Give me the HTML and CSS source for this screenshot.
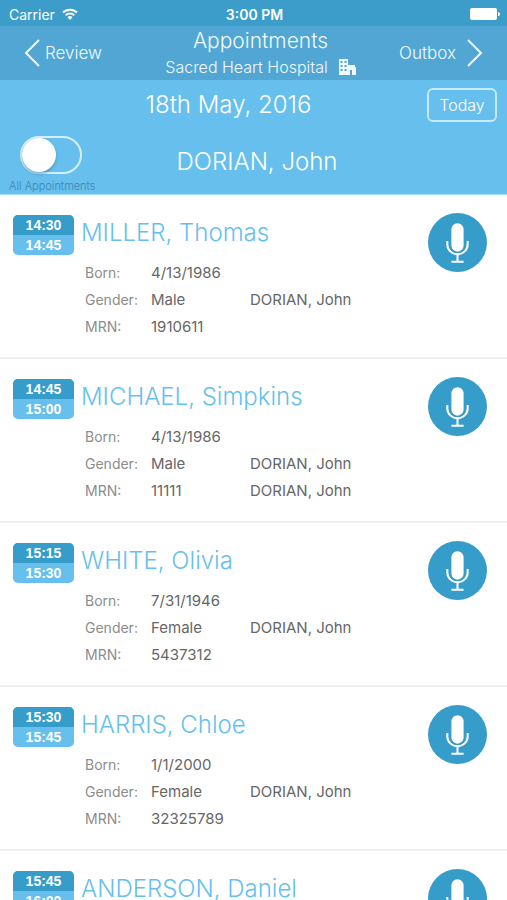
FILE: index.html
```html
<!DOCTYPE html>
<html lang="en">
<head>
<meta charset="utf-8">
<meta name="viewport" content="width=device-width, initial-scale=1">
<title>Appointments</title>
<link rel="stylesheet" href="styles.css">
</head>
<body>
<svg class="defs" width="0" height="0" aria-hidden="true">
  <symbol id="mic" viewBox="0 0 58 58">
    <rect x="23" y="10" width="12" height="28" rx="6" fill="currentColor"/>
    <path d="M19 27.500V31a10 9.500 0 0 0 20 0v-3.500M29 40.500V48M23 48h12" fill="none" stroke="currentColor" stroke-width="2"/>
  </symbol>
</svg>
<div class="app">
  <div class="status">
    <span class="carrier">Carrier
      <svg width="16" height="12" viewBox="0 0 16 12" fill="none" stroke="currentColor" stroke-width="2" aria-hidden="true"><path d="M1 4.500a10 10 0 0 1 14 0M3.700 7.300a6.200 6.200 0 0 1 8.600 0"/><path d="M8 12 5.500 9.300a3.600 3.600 0 0 1 5 0z" fill="currentColor" stroke="none"/></svg>
    </span>
    <time class="clock">3:00 PM</time>
    <svg class="battery" width="30" height="12" viewBox="0 0 30 12" fill="currentColor" aria-hidden="true"><rect width="27" height="12" rx="2"/><path d="M28 4a2 2 0 0 1 0 4z"/></svg>
  </div>
  <header class="nav">
    <a class="nav-link" href="#review"><svg width="16" height="28" viewBox="0 0 16 28" fill="none" stroke="currentColor" stroke-width="2" aria-hidden="true"><path d="M15 1 2 14l13 13"/></svg>Review</a>
    <div class="nav-title">
      <h1>Appointments</h1>
      <p>Sacred Heart Hospital
        <svg width="17" height="16" viewBox="0 0 17 16" fill="currentColor" fill-rule="evenodd" aria-hidden="true"><path d="M0 0h9v6h7v2h1v8h-4v-5h-2v5H0zM1.500 2v2h2V2zm4 0v2h2V2zm-4 4v2h2V6zm4 0v2h2V6zm-4 4v2h2v-2zm4 0v2h2v-2z"/></svg>
      </p>
    </div>
    <a class="nav-link nav-next" href="#outbox">Outbox<svg width="16" height="28" viewBox="0 0 16 28" fill="none" stroke="currentColor" stroke-width="2" aria-hidden="true"><path d="m1 1 13 13L1 27"/></svg></a>
  </header>
  <section class="filter">
    <div class="date-row">
      <h2>18th May, 2016</h2>
      <button class="today" type="button">Today</button>
    </div>
    <div class="doctor-row">
      <div class="toggle">
        <input type="checkbox" id="all" role="switch">
        <label for="all">All Appointments</label>
      </div>
      <h2>DORIAN, John</h2>
    </div>
  </section>
  <main class="list">
    <article class="card">
      <div class="slot"><time>14:30</time><time>14:45</time></div>
      <div class="patient">
        <h3>MILLER, Thomas</h3>
        <dl>
          <dt>Born:</dt><dd>4/13/1986</dd><dd></dd>
          <dt>Gender:</dt><dd>Male</dd><dd>DORIAN, John</dd>
          <dt>MRN:</dt><dd>1910611</dd><dd></dd>
        </dl>
      </div>
      <button class="record" type="button" aria-label="Record"><svg aria-hidden="true"><use href="#mic"/></svg></button>
    </article>
    <article class="card">
      <div class="slot"><time>14:45</time><time>15:00</time></div>
      <div class="patient">
        <h3>MICHAEL, Simpkins</h3>
        <dl>
          <dt>Born:</dt><dd>4/13/1986</dd><dd></dd>
          <dt>Gender:</dt><dd>Male</dd><dd>DORIAN, John</dd>
          <dt>MRN:</dt><dd>11111</dd><dd>DORIAN, John</dd>
        </dl>
      </div>
      <button class="record" type="button" aria-label="Record"><svg aria-hidden="true"><use href="#mic"/></svg></button>
    </article>
    <article class="card">
      <div class="slot"><time>15:15</time><time>15:30</time></div>
      <div class="patient">
        <h3>WHITE, Olivia</h3>
        <dl>
          <dt>Born:</dt><dd>7/31/1946</dd><dd></dd>
          <dt>Gender:</dt><dd>Female</dd><dd>DORIAN, John</dd>
          <dt>MRN:</dt><dd>5437312</dd><dd></dd>
        </dl>
      </div>
      <button class="record" type="button" aria-label="Record"><svg aria-hidden="true"><use href="#mic"/></svg></button>
    </article>
    <article class="card">
      <div class="slot"><time>15:30</time><time>15:45</time></div>
      <div class="patient">
        <h3>HARRIS, Chloe</h3>
        <dl>
          <dt>Born:</dt><dd>1/1/2000</dd><dd></dd>
          <dt>Gender:</dt><dd>Female</dd><dd>DORIAN, John</dd>
          <dt>MRN:</dt><dd>32325789</dd><dd></dd>
        </dl>
      </div>
      <button class="record" type="button" aria-label="Record"><svg aria-hidden="true"><use href="#mic"/></svg></button>
    </article>
    <article class="card">
      <div class="slot"><time>15:45</time><time>16:00</time></div>
      <div class="patient">
        <h3>ANDERSON, Daniel</h3>
      </div>
      <button class="record" type="button" aria-label="Record"><svg aria-hidden="true"><use href="#mic"/></svg></button>
    </article>
  </main>
</div>
</body>
</html>
```
FILE: styles.css
```css
* {
  box-sizing: border-box;
}

body,
h1,
h2,
h3,
p,
dl,
dd {
  margin: 0;
  font-weight: inherit;
}

body {
  font-family: Inter, "Liberation Sans", sans-serif;
  background: #fff;
}

button {
  font: inherit;
  padding: 0;
  cursor: pointer;
}

svg {
  flex: none;
}

.defs {
  display: none;
}

.app {
  display: flex;
  flex-direction: column;
  height: 100vh;
}

.status {
  display: grid;
  grid-template-columns: 1fr auto 1fr;
  align-items: center;
  height: 26px;
  padding: 2px 7px 0 9px;
  background: #3c9dca;
  color: #fff;
  font-size: 14px;
}

.carrier {
  display: flex;
  align-items: center;
  gap: 7px;
}

.clock {
  font-weight: 600;
}

.battery {
  justify-self: end;
}

.nav {
  display: grid;
  grid-template-columns: 1fr auto 1fr;
  align-items: center;
  height: 54px;
  padding: 0 24px;
  background: #51a6d4;
  color: #f0faff;
  font-weight: 300;
}

.nav-link {
  display: flex;
  align-items: center;
  gap: 5px;
  color: inherit;
  font-size: 17px;
  text-decoration: none;
}

.nav-next {
  justify-self: end;
  gap: 11px;
}

.nav-title {
  padding-left: 14px;
  text-align: center;
}

.nav-title h1 {
  font-size: 21px;
  line-height: 28px;
}

.nav-title p {
  display: flex;
  align-items: center;
  gap: 11px;
  font-size: 16px;
  line-height: 24px;
}

.filter {
  height: 115px;
  background: #67bfed;
  border-bottom: 1px solid #a5defc;
  color: #fff;
  font-weight: 300;
}

.filter h2 {
  flex: 1;
  font-size: 24px;
  line-height: 32px;
  text-align: center;
}

.date-row {
  display: flex;
  align-items: center;
  height: 50px;
  padding: 0 10px 0 30px;
}

.today {
  width: 70px;
  height: 34px;
  border: 2px solid #c6e9fc;
  border-radius: 6px;
  background: none;
  color: inherit;
  font-size: 16px;
}

.doctor-row {
  display: flex;
  align-items: center;
  height: 64px;
  padding: 0 94px 0 9px;
}

.toggle {
  display: flex;
  flex-direction: column;
  gap: 4px;
  width: 92px;
  padding-top: 6px;
}

.toggle input {
  appearance: none;
  width: 62px;
  height: 38px;
  margin: 0 0 0 11px;
  border: 2px solid #d5effc;
  border-radius: 19px;
}

.toggle input::before {
  content: "";
  display: block;
  width: 34px;
  height: 34px;
  border-radius: 50%;
  background: #fff;
  box-shadow: 0 2px 3px #2c6f9680;
}

.toggle input:checked::before {
  margin-left: auto;
}

.toggle label {
  color: #3b87b0;
  font-size: 11px;
  line-height: 16px;
  white-space: nowrap;
}

.list {
  flex: 1;
  min-height: 0;
  overflow-y: auto;
  scrollbar-width: none;
}

.card {
  display: flex;
  align-items: flex-start;
  height: 164px;
  padding: 18px 20px 0 13px;
  border-bottom: 2px solid #f0f0f0;
}

.slot {
  flex: none;
  width: 61px;
  margin-top: 2px;
  border-radius: 5px;
  overflow: hidden;
  background: #67bfed;
  color: #fff;
  font-family: "Liberation Sans", sans-serif;
  font-size: 14px;
  font-weight: 700;
  line-height: 20px;
  text-align: center;
}

.slot time {
  display: block;
}

.slot time:first-child {
  background: #369cca;
}

.patient {
  flex: 1;
  padding-left: 7px;
}

.patient h3 {
  color: #67bfed;
  font-size: 24px;
  font-weight: 300;
  line-height: 40px;
}

.patient dl {
  display: grid;
  grid-template-columns: 66px 99px 1fr;
  grid-auto-rows: 27px;
  align-items: center;
  margin-top: 6px;
  padding-left: 4px;
  color: #666;
  font-size: 15px;
}

.patient dt {
  color: #8c8c8c;
  font-size: 14px;
}

.record {
  flex: none;
  width: 59px;
  height: 59px;
  border: 0;
  border-radius: 50%;
  background: #369cca;
  color: #fff;
}

.record svg {
  display: block;
  width: 100%;
  height: 100%;
}
```
